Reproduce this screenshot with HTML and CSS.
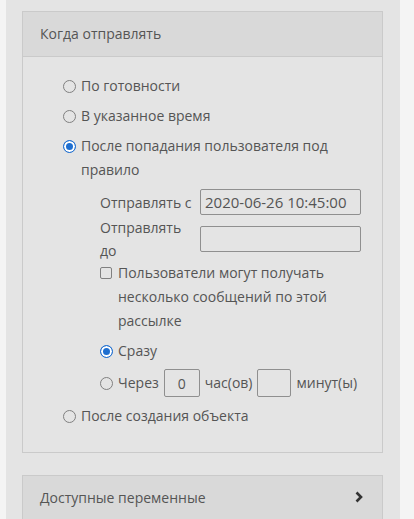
FILE: index.html
```html
<!DOCTYPE html>
<html lang="ru">
<head>
    <meta charset="UTF-8">
    <title>Рассылка</title>
    <link rel="stylesheet" href="styles.css">
</head>
<body>
    <div class="side">
        <div class="panel">
            <div class="panel-head">Когда отправлять</div>
            <div class="panel-body">
                <label class="opt"><input type="radio" name="when"><span>По готовности</span></label>
                <label class="opt"><input type="radio" name="when"><span>В указанное время</span></label>
                <label class="opt"><input type="radio" name="when" checked><span>После попадания пользователя под правило</span></label>

                <div class="sub">
                    <div class="field">
                        <span class="field-label">Отправлять с</span>
                        <input class="text" type="text" value="2020-06-26 10:45:00">
                    </div>
                    <div class="field">
                        <span class="field-label">Отправлять до</span>
                        <input class="text" type="text" value="">
                    </div>
                    <label class="opt check"><input type="checkbox"><span>Пользователи могут получать несколько сообщений по этой рассылке</span></label>
                    <label class="opt"><input type="radio" name="delay" checked><span>Сразу</span></label>
                    <div class="opt delay">
                        <input type="radio" name="delay">
                        <span>Через</span>
                        <input class="small" type="text" value="0">
                        <span>час(ов)</span>
                        <input class="small" type="text" value="">
                        <span>минут(ы)</span>
                    </div>
                </div>

                <label class="opt"><input type="radio" name="when"><span>После создания объекта</span></label>
            </div>
        </div>

        <div class="panel">
            <div class="panel-head">
                Доступные переменные
                <svg class="chev" width="10" height="12" viewBox="0 0 10 12"><polyline points="2.5,1.5 7,6 2.5,10.5" fill="none" stroke="#333" stroke-width="2.6"/></svg>
            </div>
        </div>
    </div>
</body>
</html>
```

FILE: styles.css
```css
* {
    margin: 0;
    padding: 0;
    box-sizing: border-box;
}

body {
    background: #f4f4f4;
    font-family: "Open Sans", "Liberation Sans", sans-serif;
    font-size: 14px;
    color: #555;
}

.side {
    width: 394px;
    min-height: 519px;
    margin-left: 6px;
    padding: 11px 17px 0 16px;
    background: #e4e4e4;
}

.panel {
    border: 1px solid #cacaca;
    margin-bottom: 22px;
}

.panel-head {
    display: flex;
    align-items: center;
    justify-content: space-between;
    height: 45px;
    padding: 0 18px 2px 17px;
    background: #d9d9d9;
    border-bottom: 1px solid #cacaca;
}

.panel-body {
    padding: 17px 20px 18px 40px;
}

.opt {
    display: flex;
    align-items: flex-start;
    line-height: 24px;
    margin-bottom: 6px;
}

.opt input[type=radio],
.opt input[type=checkbox] {
    appearance: none;
    flex: none;
    width: 13px;
    height: 13px;
    margin: 5.5px 5px 0 0;
    border: 1px solid #808080;
    border-radius: 50%;
    background: transparent;
}

.opt input[type=radio]:checked {
    border-color: #1f6fd0;
    background: #1f6fd0;
    box-shadow: inset 0 0 0 2px #fff;
}

.opt input[type=checkbox] {
    width: 12px;
    height: 12px;
    margin-right: 6px;
    border-radius: 2px;
}

.sub {
    padding-left: 37px;
    margin-top: 7px;
}

.field {
    display: flex;
    align-items: center;
}

.field-label {
    width: 100px;
    padding-right: 6px;
    line-height: 23px;
}

.field:nth-child(2) {
    min-height: 48px;
}

.text {
    width: 161px;
    height: 26px;
    padding: 0 4px;
    border: 1px solid #8f8f8f;
    border-radius: 2px;
    background: transparent;
    font: inherit;
    font-size: 15px;
    color: #555;
}

.check {
    margin-top: -2px;
}

.opt.delay {
    align-items: center;
    gap: 5px;
    margin-top: 1px;
    margin-bottom: 7px;
}

.delay input[type=radio] {
    margin: 0;
}

.small {
    width: 36px;
    height: 28px;
    border: 1px solid #8f8f8f;
    border-radius: 2px;
    background: transparent;
    font: inherit;
    color: #555;
    text-align: center;
}

.small + span + .small {
    width: 34px;
}

.chev {
    display: block;
}
```
